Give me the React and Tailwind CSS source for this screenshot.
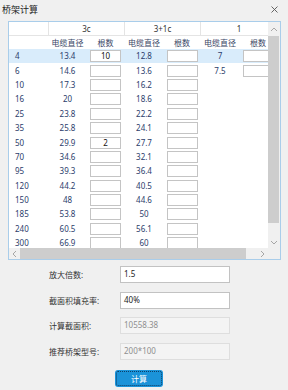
import React from 'react';

const sizes = ['4','6','10','16','25','35','50','70','95','120','150','185','240','300'];
const d3c = ['13.4','14.6','17.3','20','23.8','25.8','29.9','34.6','39.3','44.2','48','53.8','60.5','66.9'];
const c3c = { 0: '10', 6: '2' };
const d31 = ['12.8','13.6','16.2','18.6','22.2','24.1','27.7','32.1','36.4','40.5','44.6','50','56.1','60'];
const d1 = ['7', '7.5'];

function Box({ v }) {
  return (
    <div className="w-[31px] h-[12px] border border-[#c4c4c4] bg-white flex items-center justify-center text-[8px] leading-none text-[#111]">
      {v || ''}
    </div>
  );
}

function Chevron({ dir }) {
  const paths = {
    up: 'M1 5 L4 2 L7 5',
    down: 'M1 2 L4 5 L7 2',
    left: 'M5 1 L2 4 L5 7',
    right: 'M2 1 L5 4 L2 7',
  };
  const w = dir === 'up' || dir === 'down' ? 8 : 7;
  const h = dir === 'up' || dir === 'down' ? 7 : 8;
  return (
    <svg width={w} height={h} viewBox={dir === 'up' || dir === 'down' ? '0 0 8 7' : '0 0 7 8'}>
      <path d={paths[dir]} fill="none" stroke="#a6a6a6" strokeWidth="1" />
    </svg>
  );
}

function FormRow({ label, value, disabled, className }) {
  return (
    <div className={`flex items-center ${className}`}>
      <div className="w-[71px] pl-[49px] box-content shrink-0 text-[8px] leading-none text-[#333] whitespace-nowrap">{label}</div>
      <div
        className={`w-[110px] h-[17px] pl-[3px] pt-[2px] text-[8px] leading-[9px] ${
          disabled
            ? 'bg-[#f4f4f4] border border-[#dedede] text-[#8f8f8f]'
            : 'bg-white border-[1.5px] border-[#c2c2c2] text-[#222]'
        }`}
      >
        {value}
      </div>
    </div>
  );
}

export default function App() {
  return (
    <div
      className="w-[288px] h-[390px] bg-[#f0f0f0] overflow-hidden"
      style={{ fontFamily: '"Noto Sans", "Noto Sans CJK SC", sans-serif' }}
    >
      {/* Title bar */}
      <div className="h-[21px] flex items-start justify-between">
        <div className="pl-[2px] pt-[4px] text-[9px] leading-[11px] text-[#222]">桥架计算</div>
        <div className="pr-[10px] pt-[6px]">
          <svg width="7" height="7" viewBox="0 0 7 7">
            <path d="M0.5 0.5 L6.5 6.5 M6.5 0.5 L0.5 6.5" stroke="#555" strokeWidth="0.9" />
          </svg>
        </div>
      </div>

      {/* Grid panel */}
      <div className="ml-[8px] w-[273px] h-[239px] border border-[#a9cdea] bg-white flex flex-col">
        <div className="flex h-[226px]">
          <div className="w-[259px] overflow-hidden">
            <div className="w-[268px]">
              {/* header 1 */}
              <div className="flex h-[14px] border-b border-[#e4e4e4] text-[8px] leading-none text-[#333]">
                <div className="w-[40px] border-r border-[#e4e4e4]" />
                <div className="w-[76px] border-r border-[#e4e4e4] flex items-center justify-center">3c</div>
                <div className="w-[76px] border-r border-[#e4e4e4] flex items-center justify-center">3+1c</div>
                <div className="w-[76px] flex items-center justify-center">1</div>
              </div>
              {/* header 2 */}
              <div className="flex h-[13px] items-center text-[8px] leading-none text-[#3a4766]">
                <div className="w-[40px]" />
                <div className="w-[37px] text-center">电缆直径</div>
                <div className="w-[39px] text-center">根数</div>
                <div className="w-[38px] text-center">电缆直径</div>
                <div className="w-[38px] text-center">根数</div>
                <div className="w-[38px] text-center">电缆直径</div>
                <div className="w-[38px] text-center">根数</div>
              </div>
              {/* rows */}
              {sizes.map((s, i) => (
                <div
                  key={s}
                  className={`flex h-[14.4px] items-center text-[8px] leading-none text-[#2b3d6b] ${
                    i === 0 ? 'bg-[#d9ecfb]' : ''
                  }`}
                >
                  <div className="w-[40px] pl-[6px]">{s}</div>
                  <div className="w-[37px] text-center">{d3c[i]}</div>
                  <div className="w-[39px] flex justify-center">
                    <Box v={c3c[i]} />
                  </div>
                  <div className="w-[38px] text-center">{d31[i]}</div>
                  <div className="w-[38px] flex justify-center">
                    <Box />
                  </div>
                  <div className="w-[38px] text-center">{d1[i] || ''}</div>
                  <div className="w-[38px] flex justify-center">{i < 2 ? <Box /> : null}</div>
                </div>
              ))}
            </div>
          </div>
          {/* vertical scrollbar */}
          <div className="w-[12px] bg-[#f0f0f0] flex flex-col">
            <div className="h-[14px] flex items-center justify-center">
              <Chevron dir="up" />
            </div>
            <div className="h-[187px] w-[11px] bg-[#cdcdcd]" />
            <div className="flex-1" />
            <div className="h-[12px] flex items-center justify-center">
              <Chevron dir="down" />
            </div>
          </div>
        </div>
        {/* horizontal scrollbar */}
        <div className="h-[11px] flex bg-[#f0f0f0]">
          <div className="w-[11px] flex items-center justify-center">
            <Chevron dir="left" />
          </div>
          <div className="w-[226px] bg-[#cdcdcd]" />
          <div className="w-[10px]" />
          <div className="w-[12px] flex items-center justify-center">
            <Chevron dir="right" />
          </div>
          <div className="w-[12px] bg-[#f0f0f0]" />
        </div>
      </div>

      {/* Form */}
      <FormRow label="放大倍数:" value="1.5" className="mt-[6px]" />
      <FormRow label="截面积填充率:" value="40%" className="mt-[9px]" />
      <FormRow label="计算截面积:" value="10558.38" disabled className="mt-[8px]" />
      <FormRow label="推荐桥架型号:" value="200*100" disabled className="mt-[9px]" />

      <div className="mt-[10px] pl-[115px]">
        <div className="w-[48px] h-[17px] rounded-[3px] bg-[#1b93d9] p-[1px]">
          <div className="w-full h-full rounded-[2px] border border-dotted border-[#0d3f66] flex items-center justify-center text-[8px] leading-none text-white">
            计算
          </div>
        </div>
      </div>
    </div>
  );
}
